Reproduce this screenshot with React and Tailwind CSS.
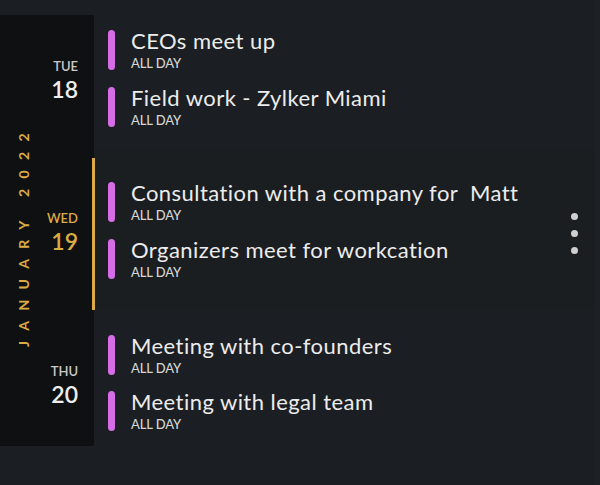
const font = { fontFamily: "Lato, 'Open Sans', sans-serif" };

const days = [
  {
    dow: "TUE",
    day: "18",
    active: false,
    pad: "pt-[15px]",
    dayPad: "pt-[44px]",
    h: "h-[135px]",
    events: ["CEOs meet up", "Field work - Zylker Miami"],
  },
  {
    dow: "WED",
    day: "19",
    active: true,
    pad: "pt-[32px]",
    dayPad: "pt-[61px]",
    h: "h-[160px]",
    events: ["Consultation with a company for  Matt", "Organizers meet for workcation"],
  },
  {
    dow: "THU",
    day: "20",
    active: false,
    pad: "pt-[25px]",
    dayPad: "pt-[54px]",
    h: "h-[136px]",
    events: ["Meeting with co-founders", "Meeting with legal team"],
  },
];

function Event({ title }) {
  return (
    <div className="flex items-start gap-[16px] h-[57px]">
      <div className="w-[7px] h-[40px] rounded-full bg-[#d76de6] shrink-0" />
      <div className="flex flex-col">
        <div className="text-[22px] leading-[22px] text-[#ececec] tracking-[0.45px] whitespace-pre">{title}</div>
        <div className="text-[13px] leading-[14px] mt-[4px] font-medium text-[#d4d4d4] tracking-[-0.1px]">
          ALL DAY
        </div>
      </div>
    </div>
  );
}

export default function App() {
  return (
    <div className="w-[600px] h-[485px] bg-[#1b1f23] pt-[15px] border-r-[5px] border-[#1d2125]" style={font}>
      <div className="grid grid-cols-[94px_1fr] relative">
        <div className="row-start-1 row-end-4 col-start-1 bg-[#0f1012]" />
        <div className="row-start-1 row-end-4 col-start-1 flex items-center pl-[13px] pt-[8px]">
          <div className="[writing-mode:vertical-rl] rotate-180 text-[14px] font-bold tracking-[10.4px] text-[#dcab44]">
            JANUARY 2022
          </div>
        </div>
        {days.map((d, i) => (
          <div key={d.day} className="contents">
            <div
              className={`col-start-1 ${
                i === 0 ? "row-start-1" : i === 1 ? "row-start-2" : "row-start-3"
              } flex flex-col items-end pr-[16px] ${d.dayPad}`}
            >
              <div
                className={`text-[13px] leading-[14px] font-semibold ${
                  d.active ? "text-[#dcab44]" : "text-[#c9c9c9]"
                }`}
              >
                {d.dow}
              </div>
              <div
                className={`text-[23px] leading-[24px] mt-[4px] font-semibold ${
                  d.active ? "text-[#dcab44]" : "text-[#ededed]"
                }`}
              >
                {d.day}
              </div>
            </div>
            <div
              className={`col-start-2 ${
                i === 0 ? "row-start-1" : i === 1 ? "row-start-2" : "row-start-3"
              } ${d.h} ${d.active ? "bg-[#1b1e21]" : ""} flex`}
            >
              <div className={`w-[14px] shrink-0 ${d.active ? "pt-[8px]" : ""}`}>
                {d.active && <div className="w-[3px] h-full bg-[#dcab44] -ml-[2px]" />}
              </div>
              <div className={`flex-1 flex flex-col ${d.pad}`}>
                {d.events.map((e) => (
                  <Event key={e} title={e} />
                ))}
              </div>
              {d.active && (
                <div className="flex flex-col items-center justify-center gap-[10px] pr-[17px] pt-[6px]">
                  <span className="w-[7px] h-[7px] rounded-full bg-[#cfcfcf]" />
                  <span className="w-[7px] h-[7px] rounded-full bg-[#cfcfcf]" />
                  <span className="w-[7px] h-[7px] rounded-full bg-[#cfcfcf]" />
                </div>
              )}
            </div>
          </div>
        ))}
      </div>
    </div>
  );
}
